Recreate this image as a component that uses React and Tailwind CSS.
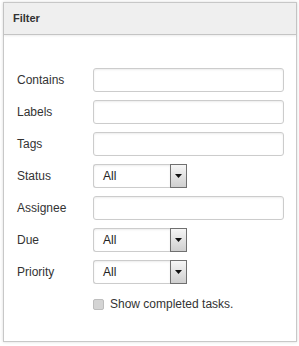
import React from "react";

function Row({ label, children }) {
  return (
    <div className="flex h-[24px] items-center">
      <div className="w-[76px] shrink-0 text-[12px] text-[#333]">{label}</div>
      {children}
    </div>
  );
}

function TextInput() {
  return (
    <div className="h-[24px] w-[191px] rounded-[3px] border border-[#cccccc] bg-white shadow-[inset_0_1px_2px_rgba(0,0,0,0.08)]" />
  );
}

function Select() {
  return (
    <div className="flex h-[24px] w-[94px] items-stretch">
      <div className="flex flex-1 items-center rounded-l-[3px] border border-r-0 border-[#cccccc] bg-white pl-[9px] text-[12px] text-[#222] shadow-[inset_0_1px_2px_rgba(0,0,0,0.08)]">
        All
      </div>
      <div className="flex w-[17px] items-center justify-center border border-[#707070] bg-gradient-to-b from-[#f6f6f6] to-[#cfcfcf]">
        <svg width="7" height="4" viewBox="0 0 7 4">
          <path d="M0 0h7L3.5 4z" fill="#111" />
        </svg>
      </div>
    </div>
  );
}

export default function App() {
  return (
    <div className="h-[346px] w-[299px] bg-white pl-[3px] pt-[2px] font-['Liberation_Sans',Arial,sans-serif]">
      <div className="flex h-[340px] w-[294px] flex-col border border-[#c8c8c8] bg-white shadow-[0_0_3px_rgba(0,0,0,0.15)]">
        <div className="flex h-[32px] shrink-0 items-center border-b border-[#c4c4c4] bg-[#efefef] pl-[9px] text-[11px] font-bold text-[#333] shadow-[0_1px_2px_rgba(0,0,0,0.08)]">
          Filter
        </div>
        <div className="flex flex-col gap-[8px] pl-[13px] pt-[33px]">
          <Row label="Contains"><TextInput /></Row>
          <Row label="Labels"><TextInput /></Row>
          <Row label="Tags"><TextInput /></Row>
          <Row label="Status"><Select /></Row>
          <Row label="Assignee"><TextInput /></Row>
          <Row label="Due"><Select /></Row>
          <Row label="Priority"><Select /></Row>
          <Row label="">
            <div className="flex items-center gap-[6px]">
              <div className="h-[11px] w-[11px] rounded-[2px] border border-[#bdbdbd] bg-[#d4d4d4]" />
              <span className="text-[12px] text-[#333]">Show completed tasks.</span>
            </div>
          </Row>
        </div>
      </div>
    </div>
  );
}
